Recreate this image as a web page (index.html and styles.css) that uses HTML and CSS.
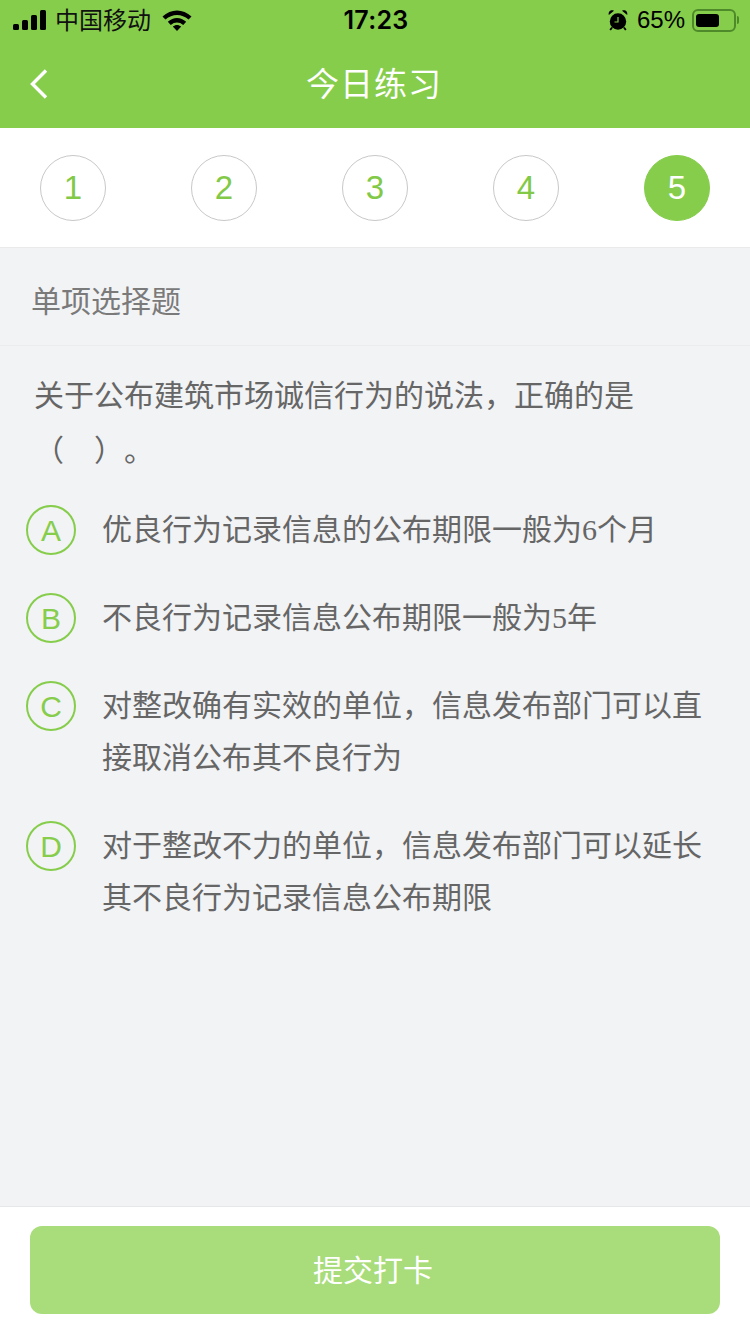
FILE: index.html
```html
<!DOCTYPE html>
<html lang="zh-CN">
<head>
<meta charset="utf-8">
<title>今日练习</title>
<link rel="stylesheet" href="styles.css">
</head>
<body>
<div class="page">
  <header class="top">
    <div class="status">
      <div class="status-side">
        <svg class="signal" width="33" height="20" viewBox="0 0 33 20"><rect x="0" y="14" width="6" height="6" rx="1.5"/><rect x="9" y="10" width="6" height="10" rx="1.5"/><rect x="18" y="5" width="6" height="15" rx="1.5"/><rect x="27" y="0" width="6" height="20" rx="1.5"/></svg>
        <span class="carrier">中国移动</span>
        <svg class="wifi" width="30" height="22" viewBox="0 0 30 22"><path d="M0.5 7.5 C9 -0.5 21 -0.5 29.5 7.5 L26.6 10.6 C19.6 4.6 10.4 4.6 3.4 10.6 Z"/><path d="M5.8 12.8 C11.4 7.6 18.6 7.6 24.2 12.8 L21.2 15.9 C17.4 12.6 12.6 12.6 8.8 15.9 Z"/><path d="M10.8 17.6 C13.4 15.5 16.6 15.5 19.2 17.6 L15 22 Z"/></svg>
      </div>
      <span class="clock">17:23</span>
      <div class="status-side status-right">
        <svg class="alarm" width="22" height="22" viewBox="0 0 22 22"><circle cx="11" cy="12.5" r="8.2"/><path d="M1.8 6 C1 2.5 4 0.2 7 1.8 Z M20.2 6 C21 2.5 18 0.2 15 1.8 Z"/><path d="M5 18.5 L3.2 21 M17 18.5 L18.8 21" stroke="#000" stroke-width="1.8"/><path d="M11 8 V13 H7.5" fill="none" stroke="#86cd4b" stroke-width="1.2"/></svg>
        <span class="battery-pct">65%</span>
        <div class="battery"><div class="battery-level"></div></div>
        <div class="battery-cap"></div>
      </div>
    </div>
    <div class="titlebar">
      <svg class="back" width="20" height="32" viewBox="0 0 20 32"><path d="M17 2.5 L3.5 16 L17 29.5" fill="none" stroke="#fff" stroke-width="3.4"/></svg>
      <h1 class="title">今日练习</h1>
    </div>
  </header>

  <nav class="steps">
    <div class="step">1</div>
    <div class="step">2</div>
    <div class="step">3</div>
    <div class="step">4</div>
    <div class="step step-active">5</div>
  </nav>

  <main class="content">
    <div class="kind">单项选择题</div>
    <p class="question">关于公布建筑市场诚信行为的说法，正确的是<br>（　）。</p>
    <ul class="options">
      <li class="option"><span class="letter">A</span><span class="option-text">优良行为记录信息的公布期限一般为<span class="num">6</span>个月</span></li>
      <li class="option"><span class="letter">B</span><span class="option-text">不良行为记录信息公布期限一般为<span class="num">5</span>年</span></li>
      <li class="option"><span class="letter">C</span><span class="option-text">对整改确有实效的单位，信息发布部门可以直接取消公布其不良行为</span></li>
      <li class="option"><span class="letter">D</span><span class="option-text">对于整改不力的单位，信息发布部门可以延长其不良行为记录信息公布期限</span></li>
    </ul>
  </main>

  <footer class="bottom">
    <button class="submit" type="button">提交打卡</button>
  </footer>
</div>
</body>
</html>
```
FILE: styles.css
```css
* { box-sizing: border-box; }

html, body { margin: 0; padding: 0; }

body {
  font-family: "Liberation Sans", "Noto Sans CJK SC", sans-serif;
  background: #f2f3f5;
}

.page {
  width: 750px;
  height: 1334px;
  display: flex;
  flex-direction: column;
  overflow: hidden;
}

/* Green header with the phone status row */
.top {
  height: 128px;
  background: #86cd4b;
  flex: none;
}

.status {
  height: 40px;
  padding: 0 11px 0 13px;
  display: flex;
  align-items: center;
  justify-content: space-between;
  color: #000;
}

.status svg { display: block; }

.status-side {
  display: flex;
  align-items: center;
  width: 260px;
}

.status-right { justify-content: flex-end; }

.carrier {
  font-size: 24px;
  line-height: 40px;
  margin-left: 9px;
  margin-top: 2px;
  color: #111;
}

.wifi { margin-left: 11px; }

.clock {
  font-family: Inter, "Liberation Sans", sans-serif;
  font-size: 25px;
  font-weight: 600;
  letter-spacing: 0.3px;
}

.battery-pct {
  font-size: 24px;
  margin-left: 8px;
}

.battery {
  width: 44px;
  height: 23px;
  margin-left: 7px;
  border: 2px solid #4f8a2a;
  border-radius: 6px;
  padding: 3px 2px;
}

.battery-level {
  width: 23px;
  height: 13px;
  background: #000;
  border-radius: 3px;
}

.battery-cap {
  width: 2px;
  height: 8px;
  margin-left: 1px;
  background: #4f8a2a;
  border-radius: 0 2px 2px 0;
}

.titlebar {
  height: 88px;
  display: flex;
  align-items: center;
  justify-content: center;
  position: relative;
}

.back {
  position: absolute;
  left: 29px;
  top: 28px;
}

.title {
  margin: 0 2px 5px 0;
  font-size: 33px;
  font-weight: 400;
  color: #fff;
  letter-spacing: 1px;
}

/* Question number strip */
.steps {
  height: 120px;
  flex: none;
  background: #fff;
  border-bottom: 1px solid #e9eaec;
  padding: 27px 40px 0;
  display: flex;
  justify-content: space-between;
  align-items: flex-start;
}

.step {
  width: 66px;
  height: 66px;
  border: 1px solid #c8c8c8;
  border-radius: 50%;
  display: flex;
  align-items: center;
  justify-content: center;
  font-size: 33px;
  color: #82c947;
}

.step-active {
  background: #86cd4b;
  border-color: #86cd4b;
  color: #fff;
}

.content {
  flex: 1;
  min-height: 0;
}

.kind {
  height: 98px;
  padding: 4px 0 0 31px;
  border-bottom: 1px solid #ebecee;
  display: flex;
  align-items: center;
  font-size: 30px;
  color: #7a7a7a;
}

.question {
  margin: 0;
  padding: 22px 34px 0;
  font-size: 30px;
  line-height: 55px;
  color: #666;
  text-spacing-trim: space-all;
}

.options {
  list-style: none;
  margin: 26px 0 0;
  padding: 0 40px 0 26px;
}

.option {
  display: flex;
  align-items: flex-start;
  margin-bottom: 36px;
}

.letter {
  flex: none;
  width: 50px;
  height: 50px;
  border: 2px solid #86cd4b;
  border-radius: 50%;
  margin-top: 1px;
  padding-top: 2px;
  display: flex;
  align-items: center;
  justify-content: center;
  font-size: 30px;
  color: #86cd4b;
}

.option-text {
  margin-left: 26px;
  font-size: 30px;
  line-height: 52px;
  color: #666;
}

.num { font-family: "Liberation Serif", serif; }

/* Submit bar pinned under the question */
.bottom {
  height: 128px;
  flex: none;
  background: #fff;
  border-top: 1px solid #e6e7e9;
  padding: 19px 30px 0;
}

.submit {
  display: block;
  width: 690px;
  height: 88px;
  border: 0;
  border-radius: 12px;
  padding: 0 4px 4px 0;
  background: #a9dc7a;
  color: #fff;
  font-family: inherit;
  font-size: 30px;
}
```
